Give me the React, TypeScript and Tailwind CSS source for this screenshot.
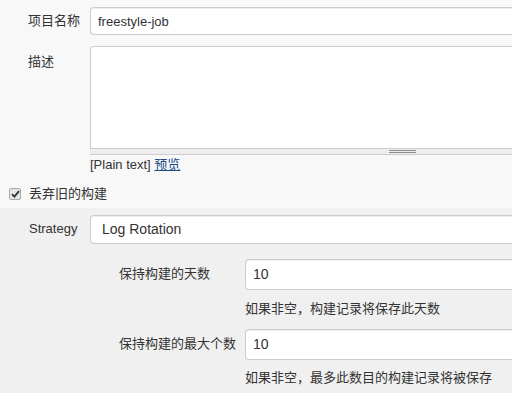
const font = "font-['Liberation_Sans','Noto_Sans_CJK_SC',sans-serif]";

const inputCls =
  "block shrink-0 rounded-l-[4px] border border-r-0 border-[#cccccc] bg-white px-[7px] text-[13px] text-[#333] shadow-[inset_0_1px_1px_rgba(0,0,0,0.075)] outline-none";

export default function App() {
  return (
    <div className={`${font} h-[393px] w-[512px] overflow-hidden bg-[#f8f8f8] text-[13px] text-[#333]`}>
      {/* 项目名称 */}
      <div className="flex items-center pt-[7px]">
        <div className="w-[90px] shrink-0 whitespace-nowrap pl-[28px]">项目名称</div>
        <input className={`${inputCls} h-[28px] w-[440px] px-[5px] text-[13.5px]`} defaultValue="freestyle-job" readOnly />
      </div>

      {/* 描述 */}
      <div className="mt-[11px] flex">
        <div className="w-[90px] shrink-0 pl-[28px] pt-[6px]">描述</div>
        <div className="w-[440px] shrink-0">
          <textarea className="block h-[103px] w-full resize-none rounded-tl-[4px] border border-r-0 border-[#cccccc] bg-white outline-none" readOnly />
          <div className="flex h-[6px] items-center border-b border-[#cccccc] bg-[#eeeeee] pl-[299px]">
            <div className="h-[3px] w-[27px] border-y border-[#8a8a8a]" />
          </div>
          <div className="pt-[1px] leading-[17px]">
            [Plain text]{" "}
            <a href="#" className="text-[#204a87] underline">预览</a>
          </div>
        </div>
      </div>

      {/* 丢弃旧的构建 */}
      <div className="mt-[11px] flex items-center pl-[9px]">
        <div className="flex h-[12px] w-[12px] items-center justify-center rounded-[2px] border border-[#a9a9a9] bg-[#e6e6e6]">
          <svg width="9" height="8" viewBox="0 0 9 8">
            <path d="M1 4.2 L3.4 6.6 L8 1.2" fill="none" stroke="#333" strokeWidth="1.8" />
          </svg>
        </div>
        <span className="ml-[8px]">丢弃旧的构建</span>
      </div>

      {/* nested section */}
      <div className="mt-[4px] bg-[#f0f0f0] pb-[20px] pt-[7px]">
        <div className="flex items-center">
          <div className="w-[90px] shrink-0 pl-[29px]">Strategy</div>
          <div className={`${inputCls} flex h-[29px] w-[440px] items-center px-[11px] text-[14px]`}>Log Rotation</div>
        </div>

        <div className="mt-[15px] flex items-center">
          <div className="w-[245px] shrink-0 whitespace-nowrap pl-[119px]">保持构建的天数</div>
          <input className={`${inputCls} h-[31px] w-[300px] text-[14px]`} defaultValue="10" readOnly />
        </div>
        <div className="whitespace-nowrap pl-[245px] pt-[10px] leading-[18px]">如果非空，构建记录将保存此天数</div>

        <div className="mt-[11px] flex items-center">
          <div className="w-[245px] shrink-0 whitespace-nowrap pl-[119px]">保持构建的最大个数</div>
          <input className={`${inputCls} h-[31px] w-[300px] text-[14px]`} defaultValue="10" readOnly />
        </div>
        <div className="whitespace-nowrap pl-[245px] pt-[9px] leading-[18px]">如果非空，最多此数目的构建记录将被保存</div>
      </div>
    </div>
  );
}
